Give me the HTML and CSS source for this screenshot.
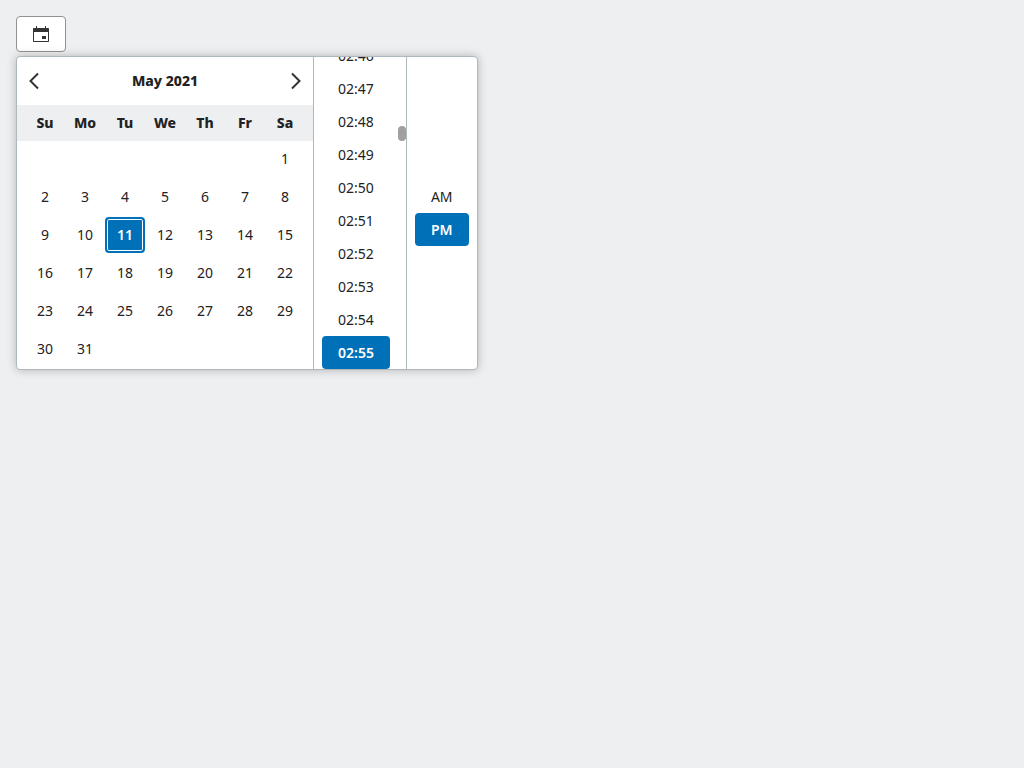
FILE: index.html
```html
<!DOCTYPE html>
<html lang="en">
<head>
<meta charset="utf-8">
<title>Date and time picker</title>
<link rel="stylesheet" href="styles.css">
</head>
<body>
<button class="trigger" type="button" aria-label="Open date picker" aria-expanded="true">
  <svg width="16" height="16" viewBox="0 0 16 16" aria-hidden="true"><path fill="#333" fill-rule="evenodd" d="M3 0h1v2h8V0h1v2h2.3a.7.7 0 0 1 .7.7v12.6a.7.7 0 0 1-.7.7H.7a.7.7 0 0 1-.7-.7V2.700a.7.7 0 0 1 .7-.7H3zM1 6v9h14V6zM9 10h4v3H9z"/></svg>
</button>
<div class="picker" role="dialog" aria-label="Choose date and time">
  <section class="calendar">
    <header class="month-bar">
      <button class="nav" type="button" aria-label="Previous month"><svg width="18" height="18" viewBox="0 0 18 18" aria-hidden="true"><path d="M13 1.500L5.500 9l7.500 7.500"/></svg></button>
      <span class="month">May 2021</span>
      <button class="nav" type="button" aria-label="Next month"><svg width="18" height="18" viewBox="0 0 18 18" aria-hidden="true"><path d="M5 1.500L12.500 9 5 16.500"/></svg></button>
    </header>
    <div class="week names"><span>Su</span><span>Mo</span><span>Tu</span><span>We</span><span>Th</span><span>Fr</span><span>Sa</span></div>
    <div class="week days">
      <button class="day first" type="button">1</button>
      <button class="day" type="button">2</button><button class="day" type="button">3</button><button class="day" type="button">4</button><button class="day" type="button">5</button><button class="day" type="button">6</button><button class="day" type="button">7</button><button class="day" type="button">8</button>
      <button class="day" type="button">9</button><button class="day" type="button">10</button><button class="day chosen" type="button" aria-pressed="true">11</button><button class="day" type="button">12</button><button class="day" type="button">13</button><button class="day" type="button">14</button><button class="day" type="button">15</button>
      <button class="day" type="button">16</button><button class="day" type="button">17</button><button class="day" type="button">18</button><button class="day" type="button">19</button><button class="day" type="button">20</button><button class="day" type="button">21</button><button class="day" type="button">22</button>
      <button class="day" type="button">23</button><button class="day" type="button">24</button><button class="day" type="button">25</button><button class="day" type="button">26</button><button class="day" type="button">27</button><button class="day" type="button">28</button><button class="day" type="button">29</button>
      <button class="day" type="button">30</button><button class="day" type="button">31</button>
    </div>
  </section>
  <section class="times" aria-label="Time">
    <div class="time-list">
      <button class="option" type="button">02:46</button>
      <button class="option" type="button">02:47</button>
      <button class="option" type="button">02:48</button>
      <button class="option" type="button">02:49</button>
      <button class="option" type="button">02:50</button>
      <button class="option" type="button">02:51</button>
      <button class="option" type="button">02:52</button>
      <button class="option" type="button">02:53</button>
      <button class="option" type="button">02:54</button>
      <button class="option selected" type="button" aria-pressed="true">02:55</button>
    </div>
    <span class="thumb"></span>
  </section>
  <section class="meridiem" aria-label="AM or PM">
    <button class="option" type="button">AM</button>
    <button class="option selected" type="button" aria-pressed="true">PM</button>
  </section>
</div>
</body>
</html>
```
FILE: styles.css
```css
* { box-sizing: border-box; }
body {
  margin: 0;
  padding: 16px;
  background: #eeeff1;
  color: #222;
  font: 14px/20px "Noto Sans", sans-serif;
}
button {
  margin: 0;
  padding: 0;
  border: 0;
  background: none;
  color: inherit;
  font: inherit;
  cursor: pointer;
}
svg { display: block; }
.trigger {
  display: flex;
  align-items: center;
  padding: 9px 16px;
  border: 1px solid #919191;
  border-radius: 4px;
  background: #fff;
}
.picker {
  display: flex;
  width: fit-content;
  margin-top: 4px;
  border: 1px solid #afb8bd;
  border-radius: 4px;
  background: #fff;
  box-shadow: 0 0 10px rgba(0, 0, 0, 0.25);
}
.month-bar {
  display: flex;
  align-items: center;
  justify-content: space-between;
  padding: 6px 0;
}
.month { font-weight: 800; }
.nav { padding: 9px 8px; }
.nav path {
  fill: none;
  stroke: #333;
  stroke-width: 2;
}
.week {
  display: grid;
  grid-template-columns: repeat(7, 40px);
  padding: 0 8px;
  text-align: center;
}
.names {
  padding: 8px;
  background: #eeeff1;
  font-weight: 800;
}
.days {
  row-gap: 2px;
  padding-bottom: 2px;
}
.day {
  padding: 8px 0;
  border-radius: 4px;
}
.first { grid-column-start: 7; }
.chosen {
  border: 2px solid #0070b9;
  padding: 6px 0;
  background: #0070b9;
  box-shadow: inset 0 0 0 1px #fff;
  color: #fff;
  font-weight: 600;
}
.times {
  position: relative;
  display: grid;
  border-left: 1px solid #afb8bd;
  border-right: 1px solid #afb8bd;
}
.time-list {
  display: flex;
  flex-direction: column;
  justify-content: flex-end;
  height: 312px;
  padding: 0 16px 0 8px;
  overflow: hidden;
}
.option {
  flex: none;
  padding: 0 16px;
  border-radius: 4px;
  line-height: 33px;
}
.selected {
  background: #0070b9;
  color: #fff;
  font-weight: 600;
}
.thumb {
  position: absolute;
  top: 69px;
  right: 0;
  width: 8px;
  height: 15px;
  border-radius: 4px;
  background: #a0a0a0;
}
.meridiem {
  display: flex;
  flex-direction: column;
  justify-content: center;
  padding: 0 8px;
}
```
